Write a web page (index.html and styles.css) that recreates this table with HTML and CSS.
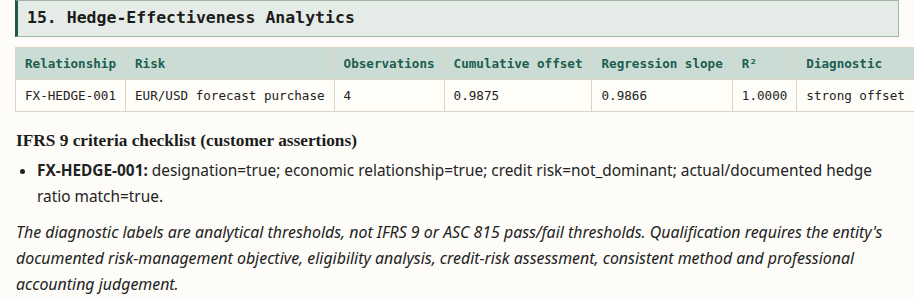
FILE: index.html
```html
<!DOCTYPE html>
<html lang="en">
<head>
<meta charset="utf-8">
<title>Hedge-Effectiveness Analytics</title>
<link rel="stylesheet" href="styles.css">
</head>
<body>
<main class="page">
  <h2 class="section-title">15. Hedge-Effectiveness Analytics</h2>
  <table class="data-table">
    <thead>
      <tr>
        <th>Relationship</th>
        <th>Risk</th>
        <th>Observations</th>
        <th>Cumulative offset</th>
        <th>Regression slope</th>
        <th>R²</th>
        <th>Diagnostic</th>
      </tr>
    </thead>
    <tbody>
      <tr>
        <td>FX-HEDGE-001</td>
        <td>EUR/USD forecast purchase</td>
        <td>4</td>
        <td>0.9875</td>
        <td>0.9866</td>
        <td>1.0000</td>
        <td>strong offset</td>
      </tr>
    </tbody>
  </table>
  <h3 class="sub-title">IFRS 9 criteria checklist (customer assertions)</h3>
  <ul class="criteria">
    <li><strong>FX-HEDGE-001:</strong> designation=true; economic relationship=true; credit risk=not_dominant; actual/documented hedge ratio match=true.</li>
  </ul>
  <p class="note">The diagnostic labels are analytical thresholds, not IFRS 9 or ASC 815 pass/fail thresholds. Qualification requires the entity's documented risk-management objective, eligibility analysis, credit-risk assessment, consistent method and professional accounting judgement.</p>
</main>
</body>
</html>
```
FILE: styles.css
```css
html, body {
  margin: 0;
  padding: 0;
  background: #fdfcf8;
}
body {
  font-family: "Noto Sans", sans-serif;
  font-size: 15.4px;
  color: #222;
}
.page {
  padding: 0 15px;
}
.section-title {
  margin: 0 0 10px;
  padding: 6px 10px 7px 9px;
  background: #e5ece7;
  border: 1px solid #9fb3a8;
  border-left: 3px solid #1d5a48;
  font-family: "DejaVu Sans Mono", monospace;
  font-size: 16.5px;
  line-height: 22px;
  font-weight: bold;
  color: #1c1c1c;
}
.data-table {
  border-collapse: collapse;
  font-family: "DejaVu Sans Mono", monospace;
  font-size: 12.6px;
  line-height: 16px;
  white-space: nowrap;
}
.data-table th,
.data-table td {
  border: 1px solid #dcd3c4;
  padding: 8px 9px 7px;
  text-align: left;
}
.data-table th {
  background: #cbdcd5;
  color: #1b5e4f;
  font-weight: bold;
}
.data-table td {
  background: #fffdf8;
  color: #222;
}
.sub-title {
  margin: 17px 0 5px 1px;
  font-family: "Liberation Serif", serif;
  font-size: 17.3px;
  line-height: 24px;
  font-weight: bold;
  color: #1c1c1c;
}
.criteria {
  margin: 0;
  padding-left: 22px;
  line-height: 26px;
}
.note {
  margin: 9px 0 0 1px;
  font-size: 15.9px;
  font-style: italic;
  line-height: 26px;
}
```
